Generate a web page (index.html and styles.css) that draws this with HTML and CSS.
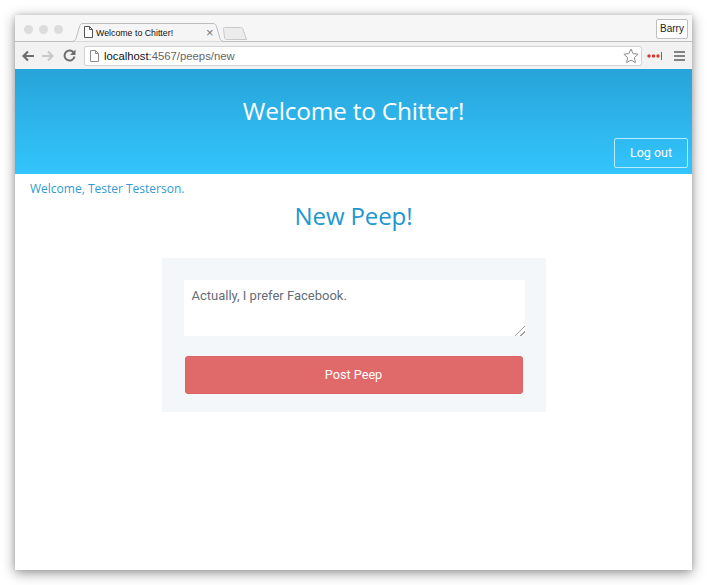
FILE: index.html
```html
<!DOCTYPE html>
<html lang="en">
<head>
<meta charset="utf-8">
<title>Welcome to Chitter!</title>
<link rel="stylesheet" href="styles.css">
</head>
<body>
<div class="window">
  <div class="tabbar">
    <div class="lights"><i></i><i></i><i></i></div>
    <div class="tab">
      <svg class="tab-shape" width="158" height="19" viewBox="0 0 158 19"><path d="M0 18.500h2c2 0 3-1 4-3l3.500-12c.6-1.800 1.500-3 3.500-3h130c2 0 3 1.200 3.500 3l3.500 12c1 2 2 3 4 3h3" fill="#f5f5f5" stroke="#bdbdbd"/></svg>
      <svg class="page" width="9" height="12" viewBox="0 0 9 12"><path d="M.5.500h5l3 3v8h-8z M5.500.500v3h3" fill="#fff" stroke="#555"/></svg>
      <span class="tab-title">Welcome to Chitter!</span>
      <span class="tab-close">×</span>
    </div>
    <svg class="newtab" width="25" height="13" viewBox="0 0 25 13"><path d="M.5 1.500c0-.6.400-1 1-1h16c1.500 0 2 .6 2.500 2l3.500 10h-20c-1 0-1.500-.5-2-1.500z" fill="#ececec" stroke="#c8c8c8"/></svg>
    <div class="user">Barry</div>
  </div>
  <div class="toolbar">
    <svg class="nav" width="13" height="12" viewBox="0 0 13 12"><path d="M13 6H3M7 1.500L2.500 6 7 10.500" fill="none" stroke="#6e6e6e" stroke-width="2.200"/></svg>
    <svg class="nav" width="13" height="12" viewBox="0 0 13 12"><path d="M0 6h10M6 1.500L10.500 6 6 10.500" fill="none" stroke="#c9c9c9" stroke-width="2.200"/></svg>
    <svg class="nav" width="13" height="13" viewBox="0 0 13 13"><path d="M11 4.200A5 5 0 1 0 11.500 7.500" fill="none" stroke="#6e6e6e" stroke-width="2"/><path d="M12.500 0.500v5.500h-5.500z" fill="#6e6e6e"/></svg>
    <div class="omnibox">
      <svg width="9" height="12" viewBox="0 0 9 12"><path d="M.5.500h5l3 3v8h-8z M5.500.500v3h3" fill="#fff" stroke="#8a8a8a"/></svg>
      <span class="url"><b>localhost</b>:4567/peeps/new</span>
      <svg class="star" width="16" height="16" viewBox="0 0 16 16"><path d="M8 1l2.100 4.600 5 .6-3.700 3.400 1 5-4.400-2.500-4.400 2.500 1-5L.9 6.200l5-.6z" fill="#fff" stroke="#8c8c8c"/></svg>
    </div>
    <svg class="ext" width="15" height="8" viewBox="0 0 15 8"><circle cx="2" cy="4" r="1.700" fill="#e0392f"/><circle cx="6.500" cy="4" r="1.700" fill="#e0392f"/><circle cx="11" cy="4" r="1.700" fill="#e0392f"/><path d="M14.500 0v8" stroke="#e0392f"/></svg>
    <svg class="menu" width="11" height="10" viewBox="0 0 11 10"><path d="M0 1h11M0 5h11M0 9h11" stroke="#5f5f5f" stroke-width="1.700"/></svg>
  </div>
  <div class="page-body">
    <header class="hero">
      <h1>Welcome to Chitter!</h1>
      <a class="logout">Log out</a>
    </header>
    <p class="welcome">Welcome, Tester Testerson.</p>
    <h2>New Peep!</h2>
    <form class="panel">
      <textarea class="peep" readonly>Actually, I prefer Facebook.</textarea>
      <button class="post" type="button">Post Peep</button>
    </form>
  </div>
</div>
</body>
</html>
```
FILE: styles.css
```css
* { box-sizing: border-box; }
html, body { margin: 0; background: #fff; }
body { padding: 15px 15px 0; height: 585px; overflow: hidden; }
.window {
  width: 677px;
  height: 555px;
  background: #fff;
  display: flex;
  flex-direction: column;
  box-shadow: 0 3px 12px rgba(0,0,0,.42), 0 0 5px rgba(0,0,0,.12);
}
.tabbar {
  height: 27px;
  flex: none;
  position: relative;
  display: flex;
  align-items: flex-end;
  background: #f6f6f6;
  border-bottom: 1px solid #bdbdbd;
  padding-left: 9px;
}
.lights { display: flex; gap: 6px; align-self: flex-start; margin-top: 10px; width: 46px; }
.lights i { width: 9px; height: 9px; border-radius: 50%; background: #dcdcdc; display: block; }
.tab {
  position: relative;
  width: 158px;
  height: 19px;
  margin-bottom: -1px;
  display: flex;
  align-items: center;
  padding-left: 26px;
}
.tab-shape { position: absolute; left: 0; bottom: 0; }
.page { position: absolute; left: 14px; top: 3px; }
.tab-title {
  position: relative;
  font: 8.800px "Liberation Sans", Arial, sans-serif;
  color: #111;
}
.tab-close { position: absolute; left: 136px; top: 1px; font: 13px/18px "Liberation Sans", sans-serif; color: #777; }
.newtab { margin: 0 0 1px -5px; position: relative; flex: none; }
.user {
  position: absolute;
  right: 4px;
  top: 4px;
  width: 32px;
  height: 20px;
  border: 1px solid #c0c0c0;
  border-radius: 2px;
  background: #fdfdfd;
  font: 10px/18px "Liberation Sans", Arial, sans-serif;
  text-align: center;
  color: #222;
}
.toolbar {
  height: 27px;
  flex: none;
  display: flex;
  align-items: center;
  background: #f2f2f2;
  padding-left: 6px;
}
.nav { margin-right: 8px; flex: none; }
.omnibox {
  width: 558px;
  height: 20px;
  background: #fff;
  border: 1px solid #d2d2d2;
  border-radius: 2px;
  display: flex;
  align-items: center;
  padding-left: 5px;
}
.url {
  font: 11.300px "Liberation Sans", Arial, sans-serif;
  color: #666;
  margin-left: 5px;
  flex: 1;
}
.url b { font-weight: 400; color: #111; }
.star { margin-right: 2px; }
.ext { margin-left: 5px; flex: none; }
.menu { margin-left: 12px; flex: none; }
.page-body { flex: 1; min-height: 0; text-align: center; }
.hero {
  height: 105px;
  position: relative;
  background: linear-gradient(#27a4d9, #33c5fd);
  padding-top: 26px;
}
h1 {
  margin: 0;
  font: 400 24.500px/32px "Open Sans", sans-serif;
  color: #fff;
  letter-spacing: -.25px;
}
.logout {
  position: absolute;
  right: 4px;
  bottom: 6px;
  width: 74px;
  height: 30px;
  border: 1px solid #b5ecff;
  border-radius: 2px;
  font: 12.500px/28px Roboto, sans-serif;
  color: #fff;
}
.welcome {
  margin: 0;
  padding: 6px 0 0 15px;
  text-align: left;
  font: 12px/17px "Open Sans", sans-serif;
  color: #2f9bd1;
}
h2 {
  margin: 0;
  padding-top: 2px;
  font: 400 24px/33px "Open Sans", sans-serif;
  color: #2196cf;
  letter-spacing: -.1px;
}
.panel {
  width: 384px;
  height: 154px;
  margin: 26px auto 0;
  padding: 22px 20px 0 22px;
  background: #f4f7fa;
  display: flex;
  flex-direction: column;
  align-items: flex-start;
}
.peep {
  width: 341px;
  height: 56px;
  flex: none;
  border: 0;
  outline: 0;
  padding: 8px;
  margin: 0;
  background: #fff;
  font: 13px/16px Roboto, sans-serif;
  color: #656d78;
  display: block;
  resize: vertical;
}
.peep::-webkit-resizer {
  background: linear-gradient(135deg, transparent 0 64%, #a0a0a0 64% 69%, transparent 69% 82%, #a0a0a0 82% 87%, transparent 87%);
}
.post {
  width: 338px;
  height: 38px;
  margin: 20px 0 0 1px;
  padding: 0 0 2px;
  flex: none;
  border: 0;
  border-radius: 4px;
  background: #e06a6a;
  box-shadow: inset 0 0 0 1px #dc6464;
  color: #fff;
  font: 12.700px Roboto, sans-serif;
}
```
